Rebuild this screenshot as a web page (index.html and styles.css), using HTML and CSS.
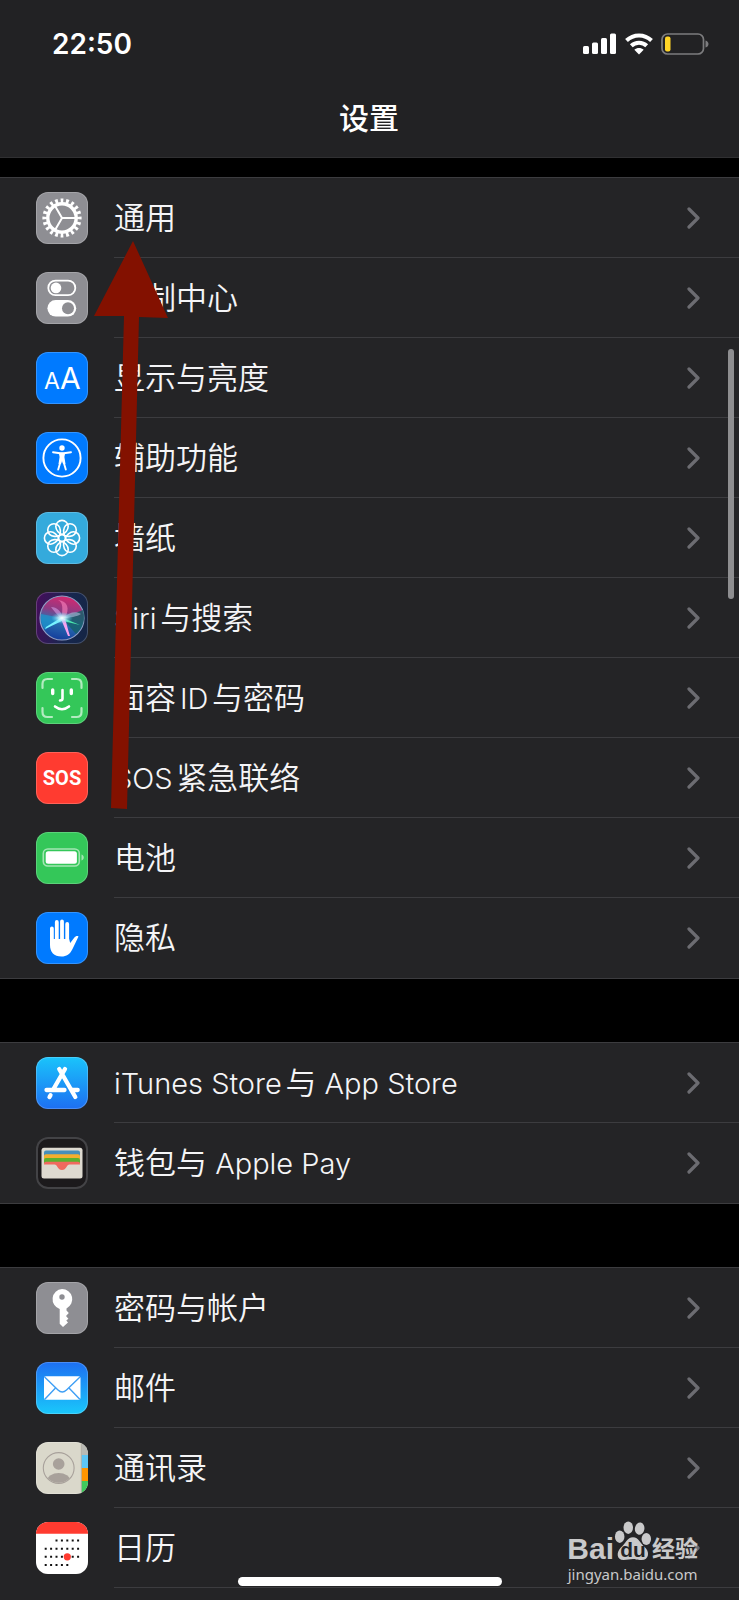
FILE: index.html
```html
<!DOCTYPE html>
<html lang="zh-CN">
<head>
  <meta charset="UTF-8">
  <meta name="viewport" content="width=device-width, initial-scale=1.0">
  <title>设置</title>
  <link rel="stylesheet" href="styles.css">
</head>
<body>
  <svg class="defs" aria-hidden="true">
    <symbol id="chevron" viewBox="0 0 13 22">
      <path d="M2 2 L11 11 L2 20" fill="none" stroke="currentColor" stroke-width="3.2" stroke-linecap="round" stroke-linejoin="round"/>
    </symbol>
  </svg>

  <header class="header">
    <div class="status">
      <span class="hora">22:50</span>
      <div class="status-icons">
        <svg width="34" height="22" viewBox="0 0 34 22" fill="#fff">
          <rect x="0" y="13" width="6" height="8" rx="1.5"/>
          <rect x="9" y="9.500" width="6" height="11.500" rx="1.500"/>
          <rect x="18" y="5" width="6" height="16" rx="1.5"/>
          <rect x="27" y="0.500" width="6" height="20.500" rx="1.500"/>
        </svg>
        <svg width="28" height="22" viewBox="0 0 28 22">
          <g fill="none" stroke="#fff" stroke-width="4">
            <path d="M1.500 7.500 C8.500 0.700 19.500 0.700 26.500 7.500"/>
            <path d="M6.300 12.700 C10.500 8.600 17.500 8.600 21.700 12.700"/>
          </g>
          <path d="M14 21.500 L9.300 16.800 C12 14.400 16 14.400 18.700 16.800 Z" fill="#fff"/>
        </svg>
        <svg width="49" height="22" viewBox="0 0 49 22">
          <rect x="1" y="1" width="41.500" height="20" rx="5.500" fill="none" stroke="#7c7c7e" stroke-width="1.700"/>
          <rect x="4" y="3.500" width="5.500" height="15" rx="2" fill="#ffd426"/>
          <path d="M44.500 7.500 C48.500 8.500 48.500 13.500 44.500 14.500 Z" fill="#7c7c7e"/>
        </svg>
      </div>
    </div>
    <h1 class="titulo">设置</h1>
  </header>

  <main class="ajustes">
    <ul class="grupo">
      <li><a class="fila" href="#general">
        <svg class="icono gris" viewBox="0 0 52 52">
          <g fill="none" stroke="#fff">
            <circle cx="26" cy="26" r="17.300" stroke-width="4.600" pathLength="40" stroke-dasharray="1 1" stroke-dashoffset="0.500"/>
            <circle cx="26" cy="26" r="14.200" stroke-width="3.400"/>
            <path d="M26 26 H39 M26 26 L19.500 14.700 M26 26 L19.500 37.300" stroke-width="2"/>
          </g>
        </svg>
        <span class="texto">通用</span>
        <svg class="flecha"><use href="#chevron"/></svg>
      </a></li>
      <li><a class="fila" href="#control">
        <svg class="icono gris" viewBox="0 0 52 52">
          <rect x="12.300" y="8.600" width="27" height="14.600" rx="7.300" fill="none" stroke="#fff" stroke-width="1.800"/>
          <circle cx="20" cy="15.900" r="5.300" fill="#fff"/>
          <rect x="11.400" y="28" width="28.800" height="16.600" rx="8.300" fill="#fff"/>
          <circle cx="32" cy="36.300" r="6" fill="#8e8e93"/>
        </svg>
        <span class="texto">控制中心</span>
        <svg class="flecha"><use href="#chevron"/></svg>
      </a></li>
      <li><a class="fila" href="#pantalla">
        <svg class="icono azul" viewBox="0 0 52 52">
          <text class="letra" x="8" y="37" font-size="23">A</text>
          <text class="letra" x="24" y="37" font-size="30">A</text>
        </svg>
        <span class="texto">显示与亮度</span>
        <svg class="flecha"><use href="#chevron"/></svg>
      </a></li>
      <li><a class="fila" href="#accesibilidad">
        <svg class="icono azul" viewBox="0 0 52 52">
          <circle cx="26" cy="26" r="18.600" fill="none" stroke="#fff" stroke-width="1.900"/>
          <circle cx="26" cy="16" r="2.700" fill="#fff"/>
          <path d="M17 20.200 L24 21.200 H28 L35 20.200 M24.700 29 L22.200 37.600 M27.300 29 L29.800 37.600" fill="none" stroke="#fff" stroke-width="1.900" stroke-linecap="round"/>
          <path d="M22.800 20.800 H29.200 L28.400 25 L29.500 32 L27 32 L26 28.500 L25 32 L22.500 32 L23.600 25 Z" fill="#fff"/>
        </svg>
        <span class="texto">辅助功能</span>
        <svg class="flecha"><use href="#chevron"/></svg>
      </a></li>
      <li><a class="fila" href="#fondo">
        <svg class="icono celeste" viewBox="0 0 52 52">
          <defs><path id="petalo" d="M26 22.500 C23 21.500 19.800 18 19.800 14.600 A6.200 6.200 0 0 1 32.200 14.600 C32.200 18 29 21.500 26 22.500 Z"/></defs>
          <g fill="none" stroke="#fff" stroke-width="1.600">
            <use href="#petalo"/>
            <use href="#petalo" transform="rotate(45 26 26)"/>
            <use href="#petalo" transform="rotate(90 26 26)"/>
            <use href="#petalo" transform="rotate(135 26 26)"/>
            <use href="#petalo" transform="rotate(180 26 26)"/>
            <use href="#petalo" transform="rotate(225 26 26)"/>
            <use href="#petalo" transform="rotate(270 26 26)"/>
            <use href="#petalo" transform="rotate(315 26 26)"/>
            <circle cx="26" cy="26" r="3.400"/>
          </g>
        </svg>
        <span class="texto">墙纸</span>
        <svg class="flecha"><use href="#chevron"/></svg>
      </a></li>
      <li><a class="fila" href="#siri">
        <svg class="icono siri" viewBox="0 0 52 52">
          <defs>
            <linearGradient id="orbe" x1="0.600" y1="0" x2="0.400" y2="1">
              <stop offset="0" stop-color="#d5286f"/>
              <stop offset="0.350" stop-color="#8d3b84"/>
              <stop offset="0.600" stop-color="#2a70b0"/>
              <stop offset="1" stop-color="#133c9c"/>
            </linearGradient>
            <radialGradient id="brillo">
              <stop offset="0" stop-color="#fff"/>
              <stop offset="0.350" stop-color="#c5f6ff" stop-opacity="0.800"/>
              <stop offset="1" stop-color="#4bd0f0" stop-opacity="0"/>
            </radialGradient>
          </defs>
          <circle cx="26" cy="26" r="22" fill="url(#orbe)" stroke="#8f9fc6" stroke-width="1.200"/>
          <path d="M26 26 L47 18 A22 22 0 0 1 40 42 Z" fill="#155f68" opacity="0.800"/>
          <path d="M26 26 L5 22 A22 22 0 0 0 9 38 Z" fill="#1d9ad0" opacity="0.700"/>
          <path d="M27 26 C25 19 21 15 15 15 C18 19 21 23 26 27 Z" fill="#d59ce4" opacity="0.600"/>
          <path d="M26 26 C26 17 28 11 22 8 C32 9 34 17 29 26 Z" fill="#ef77b5" opacity="0.700"/>
          <path d="M27 26 C33 20 40 19 45 22 C41 25 34 25 27 27 Z" fill="#9bb0cf" opacity="0.700"/>
          <path d="M26 25 L10 35 L9 37 L28 28 Z" fill="#78f3ff"/>
          <path d="M27 26 L44 33 L27 29 Z" fill="#4be6ad"/>
          <path d="M25 27 L32 44 L34 44 C32 38 31 33 29 27 Z" fill="#f8a2ef"/>
          <ellipse cx="26" cy="26" rx="11" ry="6" fill="url(#brillo)"/>
        </svg>
        <span class="texto"><span class="latin">Siri</span>与搜索</span>
        <svg class="flecha"><use href="#chevron"/></svg>
      </a></li>
      <li><a class="fila" href="#faceid">
        <svg class="icono verde" viewBox="0 0 52 52">
          <g fill="none" stroke-linecap="round">
            <path d="M6.500 16 V12 Q6.500 7 11.500 7 H16 M36 7 H40.500 Q45.500 7 45.500 12 V16 M45.500 36 V40 Q45.500 45 40.500 45 H36 M16 45 H11.500 Q6.500 45 6.500 40 V36" stroke="#b3ebc0" stroke-width="2.200"/>
            <path d="M16.700 18 V21.500 M35.300 18 V21.500" stroke="#fff" stroke-width="3.400"/>
            <path d="M26.500 18 V26.500 Q26.500 28.500 24 28.500 M19 34.500 Q26 40 33 34.500" stroke="#fff" stroke-width="2.600"/>
          </g>
        </svg>
        <span class="texto">面容<span class="latin">ID</span>与密码</span>
        <svg class="flecha"><use href="#chevron"/></svg>
      </a></li>
      <li><a class="fila" href="#sos">
        <svg class="icono rojo" viewBox="0 0 52 52">
          <text class="sos" x="26" y="33" text-anchor="middle">SOS</text>
        </svg>
        <span class="texto"><span class="latin">SOS</span>紧急联络</span>
        <svg class="flecha"><use href="#chevron"/></svg>
      </a></li>
      <li><a class="fila" href="#bateria">
        <svg class="icono verde" viewBox="0 0 52 52">
          <rect x="7.300" y="17" width="36" height="17" rx="4.500" fill="none" stroke="#a4e6b4" stroke-width="1.600"/>
          <rect x="9.700" y="19.300" width="31.200" height="12.400" rx="2.500" fill="#fff"/>
          <path d="M45.500 22.500 C48.500 23.500 48.500 27.500 45.500 28.500 Z" fill="#a4e6b4"/>
        </svg>
        <span class="texto">电池</span>
        <svg class="flecha"><use href="#chevron"/></svg>
      </a></li>
      <li><a class="fila" href="#privacidad">
        <svg class="icono azul" viewBox="0 0 52 52">
          <path d="M15.900 16.500 V31 M20.800 10 V29 M26 9.500 V29 M31.200 12 V29" stroke="#fff" stroke-width="3.800" stroke-linecap="round"/>
          <path d="M14 27 H33.100 L34.200 31 L38.200 25.800 C39.500 24 41.500 23.700 42.500 24.500 L36.500 37 C34 42.300 30.500 44.500 25.500 44.500 C18 44.500 14 40 14 33 Z" fill="#fff"/>
        </svg>
        <span class="texto">隐私</span>
        <svg class="flecha"><use href="#chevron"/></svg>
      </a></li>
    </ul>

    <ul class="grupo">
      <li><a class="fila" href="#appstore">
        <svg class="icono tienda" viewBox="0 0 52 52">
          <g fill="none" stroke="#fff" stroke-width="4.300" stroke-linecap="round">
            <path d="M29 12 L17.500 32 M23.200 12 L39.300 40 M10.500 33 H28.500 M36.500 33 H41.700 M14.500 38.200 L13.500 40"/>
          </g>
        </svg>
        <span class="texto"><span class="latin">iTunes Store</span>与<span class="latin"> App Store</span></span>
        <svg class="flecha"><use href="#chevron"/></svg>
      </a></li>
      <li><a class="fila" href="#wallet">
        <svg class="icono cartera" viewBox="0 0 52 52">
          <rect x="5.500" y="10.700" width="41" height="30.800" rx="2.500" fill="#dedad0"/>
          <path d="M8 19 V15.500 Q8 13.500 10 13.500 H42 Q44 13.500 44 15.500 V19 Z" fill="#468fba"/>
          <path d="M8 22 V19 Q8 17.300 10 17.300 H42 Q44 17.300 44 19 V22 Z" fill="#f4ae2d"/>
          <path d="M8 26 V22.800 Q8 21 10 21 H42 Q44 21 44 22.800 V26 Z" fill="#5bb02f"/>
          <path d="M8 27.500 V26.500 Q8 24.800 10 24.800 H42 Q44 24.800 44 26.500 V27.500 H33.500 C30.500 27.500 30.500 33 26 33 C21.500 33 21.500 27.500 18.500 27.500 Z" fill="#f0695e"/>
        </svg>
        <span class="texto">钱包与<span class="latin"> Apple Pay</span></span>
        <svg class="flecha"><use href="#chevron"/></svg>
      </a></li>
    </ul>

    <ul class="grupo grupo-final">
      <li><a class="fila" href="#cuentas">
        <svg class="icono gris" viewBox="0 0 52 52">
          <path d="M26 7 A10.200 10.200 0 0 1 30.500 26.400 V28.500 L32.800 31 L30 34 L32.400 36.700 L30.300 38.500 L32 40.500 L27 45 L23.700 41.800 V26.900 A10.200 10.200 0 0 1 26 7 Z" fill="#fff"/>
          <circle cx="26" cy="15" r="2.700" fill="#8e8e93"/>
        </svg>
        <span class="texto">密码与帐户</span>
        <svg class="flecha"><use href="#chevron"/></svg>
      </a></li>
      <li><a class="fila" href="#correo">
        <svg class="icono correo" viewBox="0 0 52 52">
          <rect x="8" y="14.300" width="36.500" height="23.400" rx="1.800" fill="#fff"/>
          <g fill="none" stroke="#3f9ff5" stroke-width="1.400">
            <path d="M8.600 15 L22 28 Q26.200 32 30.500 28 L44 15"/>
            <path d="M8.800 37.300 L19.500 26 M43.800 37.300 L33 26"/>
          </g>
        </svg>
        <span class="texto">邮件</span>
        <svg class="flecha"><use href="#chevron"/></svg>
      </a></li>
      <li><a class="fila" href="#contactos">
        <svg class="icono contactos" viewBox="0 0 52 52">
          <defs><clipPath id="avatar"><circle cx="22.700" cy="26" r="14.800"/></clipPath></defs>
          <path d="M45.500 0 H52 V13 H45.500 Z" fill="#b9bab4"/>
          <path d="M45.500 13 H52 V26 H45.500 Z" fill="#5cc5f5"/>
          <path d="M45.500 26 H52 V39 H45.500 Z" fill="#ff9500"/>
          <path d="M45.500 39 H52 V52 H45.500 Z" fill="#3fcb5d"/>
          <path d="M45.300 0 V52" stroke="#a9a79d" stroke-width="0.800"/>
          <circle cx="22.700" cy="26" r="15.400" fill="none" stroke="#a8a19b" stroke-width="1.100"/>
          <g clip-path="url(#avatar)" fill="#a8a19b">
            <circle cx="22.700" cy="22" r="5.800"/>
            <ellipse cx="22.700" cy="38.500" rx="11.500" ry="7.500"/>
          </g>
        </svg>
        <span class="texto">通讯录</span>
        <svg class="flecha"><use href="#chevron"/></svg>
      </a></li>
      <li><a class="fila" href="#calendario">
        <svg class="icono calendario" viewBox="0 0 52 52">
          <path d="M0 0 H52 V11.700 H0 Z" fill="#ff3b30"/>
          <g stroke="#111" stroke-width="2" stroke-dasharray="2 3.400">
            <path d="M19.500 18.600 H44"/>
            <path d="M8.700 26.700 H44"/>
            <path d="M8.700 34.800 H44"/>
            <path d="M8.700 42.900 H33"/>
          </g>
          <circle cx="31.300" cy="34.800" r="3.600" fill="#ff3b30"/>
        </svg>
        <span class="texto">日历</span>
        <svg class="flecha"><use href="#chevron"/></svg>
      </a></li>
    </ul>
  </main>

  <div class="scroll"></div>
  <svg class="puntero" width="76" height="570" viewBox="0 0 76 570" aria-hidden="true">
    <path d="M39 0 L74 77 L45 76 L33 568 L17 567 L30 75 L0 75 Z" fill="#831100"/>
  </svg>
  <div class="inicio"></div>

  <div class="marca">
    <div class="marca-logo">
      <span class="bai">Bai</span>
      <svg width="38" height="42" viewBox="0 0 40 42">
        <g fill="#c9c9ca">
          <ellipse cx="6" cy="16.500" rx="5" ry="6.500"/>
          <ellipse cx="15" cy="7" rx="5" ry="6.500"/>
          <ellipse cx="27" cy="8" rx="5" ry="6.500" transform="rotate(10 27 8)"/>
          <ellipse cx="34" cy="19" rx="5" ry="6.300"/>
          <path d="M20 17 C26 17 28 24 32 27 C38 32 37 41 29 41 C24 41 22 40 20 40 C17 40 14 41 10 41 C3 41 2 33 7 28 C12 24 14 17 20 17 Z"/>
        </g>
        <text class="du" x="20" y="38" text-anchor="middle">du</text>
      </svg>
      <span class="jingyan">经验</span>
    </div>
    <span class="marca-url">jingyan.baidu.com</span>
  </div>
</body>
</html>
```
FILE: styles.css
```css
* {
  box-sizing: border-box;
}
body {
  margin: 0;
  min-height: 100vh;
  position: relative;
  display: flex;
  flex-direction: column;
  overflow-x: hidden;
  background: #000;
  color: #f5f5f7;
  font-family: Inter, "Noto Sans CJK SC", sans-serif;
}
.defs {
  position: absolute;
  width: 0;
  height: 0;
}

/* cabecera */
.header {
  background: #222224;
  border-bottom: 1px solid #303032;
  padding: 24px 29px 16px 52px;
}
.status {
  display: flex;
  justify-content: space-between;
  align-items: center;
  height: 40px;
}
.hora {
  font-size: 28px;
  font-weight: 600;
  color: #fff;
}
.status-icons {
  display: flex;
  align-items: center;
  gap: 8px;
}
.titulo {
  margin: 32px 0 0;
  padding-right: 24px;
  font-size: 30px;
  line-height: 45px;
  font-weight: 500;
  text-align: center;
  color: #fff;
}

/* lista */
.ajustes {
  flex: 1;
  display: flex;
  flex-direction: column;
  gap: 63px;
  padding-top: 19px;
}
.grupo {
  list-style: none;
  margin: 0;
  padding: 0;
  background: #242426;
  border-top: 1px solid #3c3c3f;
  border-bottom: 1px solid #3c3c3f;
}
.grupo-final {
  flex: 1;
  border-bottom: none;
}
.fila {
  position: relative;
  display: flex;
  align-items: center;
  height: 80px;
  padding: 0 39px 0 36px;
  color: inherit;
  text-decoration: none;
}
/* el separador empieza donde empieza el texto */
.fila::after {
  content: "";
  position: absolute;
  left: 114px;
  right: 0;
  bottom: 0;
  height: 1px;
  background: #3c3c3f;
}
.grupo:not(.grupo-final) li:last-child .fila::after {
  display: none;
}
.texto {
  flex: 1;
  margin-left: 26px;
  font-size: 31px;
  line-height: 44px;
  font-weight: 350;
  text-autospace: normal;
}
.latin {
  font-size: 29px;
}
.flecha {
  width: 13px;
  height: 22px;
  color: #6c6c71;
}

/* iconos */
.icono {
  width: 52px;
  height: 52px;
  border-radius: 12px;
  box-shadow: inset 0 0 0 1px rgba(255, 255, 255, 0.2);
}
.gris { background: #8e8e93; }
.azul { background: #007aff; }
.celeste { background: #34aadc; }
.verde { background: #34c759; }
.rojo { background: #ff3b30; }
.siri { background: linear-gradient(100deg, #470c5c, #17274f 60%, #142544); }
.tienda { background: linear-gradient(#1ac4fb, #1d6ff2); }
.cartera { background: #1c1a1c; box-shadow: inset 0 0 0 2px #434346; }
.correo { background: linear-gradient(#1d6ff2, #1ac8fb); }
.contactos { background: #dad8cb; }
.calendario { background: #fff; }
.letra {
  fill: #fff;
  font-family: Inter, sans-serif;
  font-weight: 400;
}
.sos {
  fill: #fff;
  font-family: Roboto, sans-serif;
  font-size: 20px;
  font-weight: 700;
}

/* capas encima de la lista */
.scroll {
  position: absolute;
  top: 349px;
  right: 5px;
  width: 6px;
  height: 250px;
  border-radius: 3px;
  background: #8e8e90;
}
.puntero {
  position: absolute;
  top: 241px;
  left: 94px;
}
.inicio {
  position: absolute;
  bottom: 14px;
  left: 50%;
  width: 264px;
  height: 9px;
  margin-left: -132px;
  border-radius: 5px;
  background: #fff;
}
.marca {
  position: absolute;
  right: 41px;
  bottom: 14px;
  display: flex;
  flex-direction: column;
  align-items: center;
  color: #c9c9ca;
}
.marca-logo {
  display: flex;
  align-items: flex-end;
}
.bai {
  font-family: "Liberation Sans", sans-serif;
  font-size: 30px;
  line-height: 26px;
  font-weight: 700;
}
.du {
  fill: #242426;
  font-family: "Liberation Sans", sans-serif;
  font-size: 22px;
  font-weight: 700;
}
.jingyan {
  font-size: 23px;
  line-height: 26px;
  font-weight: 700;
}
.marca-url {
  font-family: "Noto Sans", sans-serif;
  font-size: 15px;
  line-height: 24px;
}
```
